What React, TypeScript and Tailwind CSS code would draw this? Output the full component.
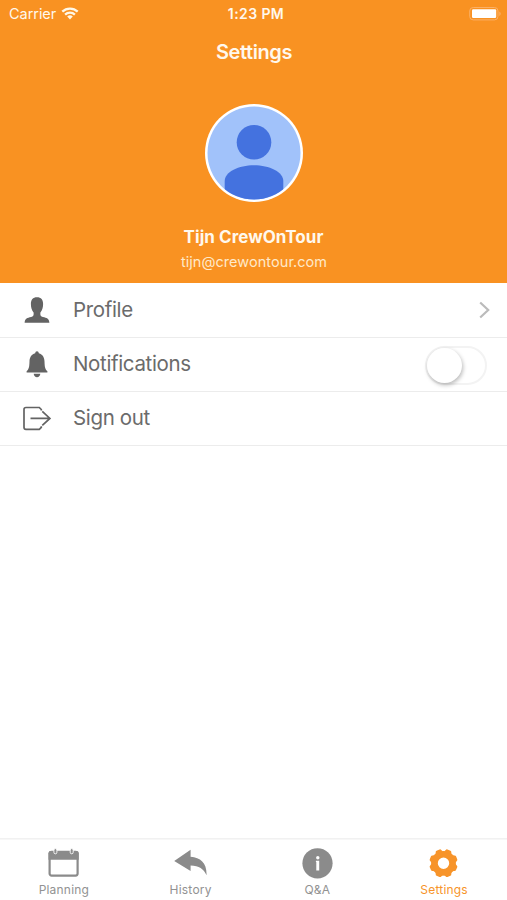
import type { ReactNode } from "react";

const teeth = Array.from({ length: 8 }, (_, i) => i * 45 + 22.5);

const WifiIcon = () => (
  <svg width="18" height="14" viewBox="0 0 18 14" fill="none" stroke="#fff8e8" strokeWidth="2.3">
    <path d="M1.3 4.6a11.2 11.2 0 0 1 15.4 0" />
    <path d="M4.1 7.6a7.1 7.1 0 0 1 9.8 0" />
    <path d="M9 12.4 6.2 9.6a4.2 4.2 0 0 1 5.6 0z" fill="#fff8e8" stroke="none" />
  </svg>
);

const BatteryIcon = () => (
  <svg width="33" height="14" viewBox="0 0 33 14">
    <rect x="1.7" y=".5" width="28.3" height="12.400" rx="3.5" fill="none" stroke="#fbb066" strokeWidth="1" />
    <rect x="4" y="2.200" width="24.200" height="8.800" rx="1.200" fill="#fff" />
    <path d="M31.300 4.500q1.400.8 1.400 2.200t-1.400 2.200z" fill="#fbb066" />
  </svg>
);

const Avatar = () => (
  <svg width="98" height="98" viewBox="0 0 98 98">
    <defs>
      <clipPath id="avatar">
        <circle cx="49" cy="49" r="46.5" />
      </clipPath>
    </defs>
    <circle cx="49" cy="49" r="49" fill="#fff" />
    <g clipPath="url(#avatar)">
      <rect width="98" height="98" fill="#a1c2fa" />
      <circle cx="49" cy="38.3" r="17.3" fill="#4472df" />
      <path d="M19.7 98V77c0-9 14-15.7 29.3-15.7S78.3 68 78.3 77v21z" fill="#4472df" />
    </g>
  </svg>
);

const PersonIcon = () => (
  <svg width="28" height="28" viewBox="0 0 28 28" fill="#636363">
    <path d="M14 .3c4.200 0 6.100 2.700 6.100 6.700 0 3.400-.9 6.400-2.700 8.400-.4 2.700.4 4.100 2.500 4.700 3.900 1 6.100 1.200 6.500 5.600H1.600c.4-4.400 2.600-4.600 6.500-5.600 2.100-.6 2.900-2 2.500-4.700C8.800 13.400 7.900 10.400 7.900 7c0-4 1.900-6.700 6.100-6.700z" />
  </svg>
);

const BellIcon = () => (
  <svg width="28" height="28" viewBox="0 0 28 28" fill="#636363">
    <path d="M14 .3c1.100 0 1.700.8 1.800 1.900 3.900 1.100 5.600 4.300 5.700 8.200.2 5.800.7 7.800 2.900 9.900v1.200H3.600v-1.200c2.200-2.100 2.700-4.100 2.900-9.900.1-3.900 1.800-7.100 5.700-8.200.1-1.100.7-1.900 1.800-1.900z" />
    <path d="M10.700 22.800h6.600c-.3 2.200-1.500 3.400-3.300 3.400s-3-1.200-3.300-3.400z" />
  </svg>
);

const SignOutIcon = () => (
  <svg width="29" height="28" viewBox="0 0 29 28" fill="none" stroke="#636363" strokeWidth="1.7">
    <path d="M18.300 5.600V4.500l-2-2H3Q1 2.500 1 4.500v17.700q0 2.200 2 2.200h13.300l2-2v-1.100" />
    <path d="M7.500 13.400h19M19.300 6.400l7.600 7-7.600 7" />
  </svg>
);

const CalendarIcon = () => (
  <svg width="32" height="32" viewBox="0 0 32 32">
    <rect x="2.600" y="3.900" width="28" height="23.700" rx="2" fill="none" stroke="#8b8b8b" strokeWidth="2.200" />
    <path d="M1.500 5.300Q1.500 3 3.800 3h25.600q2.300 0 2.300 2.300v6.400H1.500z" fill="#8b8b8b" />
    <g fill="#8b8b8b" stroke="#fff" strokeWidth=".9">
      <rect x="6.900" y=".6" width="3" height="5.200" rx="1.500" />
      <rect x="23.200" y=".6" width="3" height="5.200" rx="1.500" />
    </g>
  </svg>
);

const HistoryIcon = () => (
  <svg width="34" height="32" viewBox="0 0 34 32" fill="#8b8b8b">
    <path d="M1.200 12.900 17.600 1.800v7c10.200.6 16.500 6.800 15.900 18.400-2.800-6.500-7.400-9.500-15.900-9.800v5.600z" />
  </svg>
);

const InfoIcon = () => (
  <svg width="32" height="32" viewBox="0 0 32 32">
    <circle cx="16.500" cy="15.300" r="15.100" fill="#8b8b8b" />
    <circle cx="16.800" cy="9.700" r="1.700" fill="#fff" />
    <path d="M14.900 12.700h3.300v9.800h-2.900v-8.600h-.4z" fill="#fff" />
  </svg>
);

const GearIcon = () => (
  <svg width="32" height="32" viewBox="-15.5 -15.2 32 32" fill="#f7942a">
    <circle r="9" fill="none" stroke="#f7942a" strokeWidth="6.6" />
    {teeth.map((angle) => (
      <path key={angle} d="M-5-11q1.600-.6 2-2.100.3-1.100 1.400-1.100h3.200q1.100 0 1.400 1.100.4 1.500 2 2.100z" transform={`rotate(${angle})`} />
    ))}
  </svg>
);

const Row = ({ icon, label, children }: { icon: ReactNode; label: string; children?: ReactNode }) => (
  <div className="flex items-center h-[54px] pl-[23px] border-b border-[#ececec] text-[#6b6b6b]">
    <div className="w-[50px]">{icon}</div>
    <p className="grow pb-px text-[20.5px] leading-6 tracking-[-0.35px]">{label}</p>
    {children}
  </div>
);

const Tab = ({ icon, label, active }: { icon: ReactNode; label: string; active?: boolean }) => (
  <div className={`flex flex-col items-center flex-1 pt-2 ${active ? "text-[#f7942a]" : "text-[#929292]"}`}>
    {icon}
    <p className="mt-0.5 pl-px text-[12px] leading-4 tracking-[0.2px]">{label}</p>
  </div>
);

const App = () => {
  return (
    <div className="flex flex-col w-[507px] h-[900px] overflow-hidden bg-white font-['Inter',sans-serif]">
      <header className="flex flex-col items-center h-[283px] bg-[#f99222] text-[#fff8ed]">
        <div className="grid grid-cols-3 items-center w-full h-[27px] pl-[9px] pr-1.5">
          <div className="flex items-center gap-[5px]">
            <p className="text-[14.5px] tracking-[-0.05px]">Carrier</p>
            <WifiIcon />
          </div>
          <p className="pl-0.5 text-center text-[14px] font-semibold tracking-[0.4px]">1:23 PM</p>
          <div className="flex justify-end">
            <BatteryIcon />
          </div>
        </div>
        <h1 className="mt-[13px] pl-px text-[20px] leading-6 font-semibold tracking-[-0.4px]">Settings</h1>
        <div className="mt-[39.5px]">
          <Avatar />
        </div>
        <p className="mt-[23px] text-[17px] leading-6 font-bold tracking-[0.05px]">Tijn CrewOnTour</p>
        <p className="mt-[3px] pl-px text-[14.5px] leading-5 tracking-[0.05px] text-[#ffe9c9]">tijn@crewontour.com</p>
      </header>
      <main className="grow pt-px">
        <Row icon={<PersonIcon />} label="Profile">
          <svg className="mr-4 mb-px" width="14" height="20" viewBox="0 0 14 20" fill="none" stroke="#bbb" strokeWidth="2.2">
            <path d="m3.200 2.500 8 7.500-8 7.500" />
          </svg>
        </Row>
        <Row icon={<BellIcon />} label="Notifications">
          <div className="mr-5 mt-0.5 w-[62px] h-[39px] rounded-full border-2 border-[#f3f3f3]">
            <div className="w-[35px] h-[35px] rounded-full bg-white shadow-[1px_2px_4px_rgba(0,0,0,0.28)]" />
          </div>
        </Row>
        <Row icon={<SignOutIcon />} label="Sign out" />
      </main>
      <nav className="flex h-[61px] pt-px shadow-[0_-1px_0_#f1f1f1,inset_0_1px_0_#f7f7f7]">
        <Tab icon={<CalendarIcon />} label="Planning" />
        <Tab icon={<HistoryIcon />} label="History" />
        <Tab icon={<InfoIcon />} label="Q&A" />
        <Tab icon={<GearIcon />} label="Settings" active />
      </nav>
    </div>
  );
};

export default App;
